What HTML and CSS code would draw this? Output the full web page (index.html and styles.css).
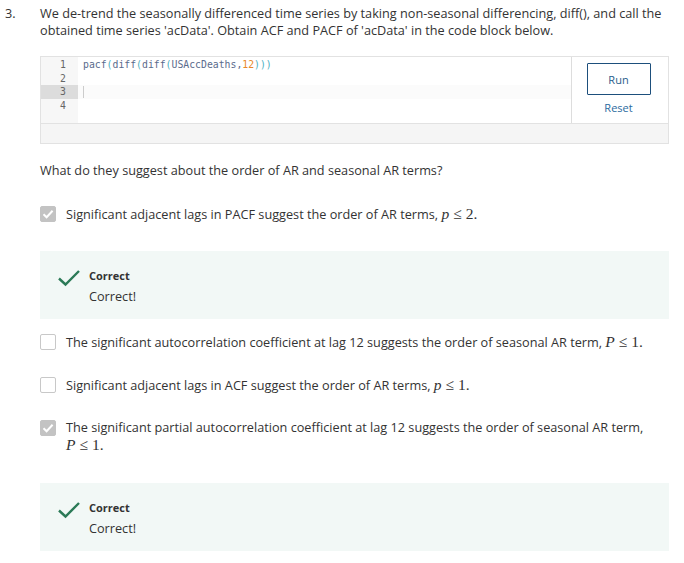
FILE: index.html
```html
<!DOCTYPE html>
<html>
<head>
<meta charset="utf-8">
<link rel="stylesheet" href="styles.css">
</head>
<body>
<div class="question">
  <div class="qnum">3.</div>
  <div class="qbody">
    <p class="prompt">We de-trend the seasonally differenced time series by taking non-seasonal differencing, diff(), and call the obtained time series 'acData'. Obtain ACF and PACF of 'acData' in the code block below.</p>

    <div class="code">
      <div class="code-main">
        <div class="editor">
          <div class="gutter">
            <div class="ln">1</div>
            <div class="ln">2</div>
            <div class="ln active">3</div>
            <div class="ln">4</div>
          </div>
          <div class="lines">
            <div class="cl">pacf<span class="p">(</span>diff<span class="p">(</span>diff<span class="p">(</span>USAccDeaths,<span class="num">12</span><span class="p">)))</span></div>
            <div class="cl">&nbsp;</div>
            <div class="cl activeline"><span class="cursor"></span></div>
            <div class="cl">&nbsp;</div>
          </div>
        </div>
        <div class="actions">
          <button class="run">Run</button>
          <span class="reset">Reset</span>
        </div>
      </div>
      <div class="code-foot"></div>
    </div>

    <p class="sub">What do they suggest about the order of AR and seasonal AR terms?</p>

    <div class="opt">
      <span class="cb checked"><svg viewBox="0 0 16 16" width="16" height="16"><path d="M3.5 8.2 L6.6 11.2 L12.6 4.8" fill="none" stroke="#fff" stroke-width="2"/></svg></span>
      <span class="otext">Significant adjacent lags in PACF suggest the order of AR terms, <span class="math"><i>p</i><span class="rel">≤</span>2.</span></span>
    </div>

    <div class="feedback">
      <svg class="tick" viewBox="0 0 24 18" width="24" height="18"><path d="M2 9.5 L8.5 15.5 L22 2" fill="none" stroke="#2b7a57" stroke-width="2.4"/></svg>
      <div class="fb-text">
        <div class="fb-title">Correct</div>
        <div class="fb-msg">Correct!</div>
      </div>
    </div>

    <div class="opt">
      <span class="cb"></span>
      <span class="otext">The significant autocorrelation coefficient at lag 12 suggests the order of seasonal AR term, <span class="math"><i>P</i><span class="rel">≤</span>1.</span></span>
    </div>

    <div class="opt">
      <span class="cb"></span>
      <span class="otext">Significant adjacent lags in ACF suggest the order of AR terms, <span class="math"><i>p</i><span class="rel">≤</span>1.</span></span>
    </div>

    <div class="opt">
      <span class="cb checked"><svg viewBox="0 0 16 16" width="16" height="16"><path d="M3.5 8.2 L6.6 11.2 L12.6 4.8" fill="none" stroke="#fff" stroke-width="2"/></svg></span>
      <span class="otext">The significant partial autocorrelation coefficient at lag 12 suggests the order of seasonal AR term, <span class="math"><i>P</i><span class="rel">≤</span>1.</span></span>
    </div>

    <div class="feedback last">
      <svg class="tick" viewBox="0 0 24 18" width="24" height="18"><path d="M2 9.5 L8.5 15.5 L22 2" fill="none" stroke="#2b7a57" stroke-width="2.4"/></svg>
      <div class="fb-text">
        <div class="fb-title">Correct</div>
        <div class="fb-msg">Correct!</div>
      </div>
    </div>
  </div>
</div>
</body>
</html>
```

FILE: styles.css
```css
html, body {
  margin: 0;
  padding: 0;
  background: #fff;
}
body {
  font-family: "Open Sans", "Liberation Sans", sans-serif;
  font-size: 12.7px;
  color: #333;
}
.question {
  display: flex;
  padding: 5px 15px 0 5px;
}
.qnum {
  width: 35px;
  flex: none;
  line-height: 17px;
}
.qbody {
  flex: 1;
}
.prompt {
  margin: 0;
  line-height: 17px;
}
.code {
  margin-top: 17px;
  border: 1px solid #e2e2e2;
}
.code-main {
  display: flex;
  height: 66px;
}
.editor {
  flex: 1;
  display: flex;
  border-right: 1px solid #ddd;
}
.gutter {
  width: 37px;
  background: #f7f7f7;
  padding-top: 1px;
}
.ln {
  height: 13.5px;
  line-height: 13.5px;
  font-family: "DejaVu Sans Mono", "Liberation Mono", monospace;
  font-size: 9.8px;
  color: #666;
  text-align: right;
  padding-right: 12px;
}
.ln.active {
  background: #dcdcdc;
}
.lines {
  flex: 1;
  padding-top: 1px;
}
.cl {
  height: 13.5px;
  line-height: 13.5px;
  font-family: "DejaVu Sans Mono", "Liberation Mono", monospace;
  font-size: 9.8px;
  color: #5a6b8c;
  padding-left: 5px;
  white-space: pre;
}
.cl .p {
  color: #4ab0c0;
}
.cl .num {
  color: #e8892b;
}
.cl.activeline {
  background: #fbfbfb;
}
.cursor {
  display: inline-block;
  width: 1px;
  height: 12px;
  background: #ccc;
  vertical-align: top;
  margin-top: 1px;
}
.actions {
  width: 93px;
  padding-right: 3px;
  display: flex;
  flex-direction: column;
  align-items: center;
  padding-top: 6px;
}
.run {
  width: 64px;
  height: 32px;
  border: 1px solid #1d4f7c;
  background: #fff;
  color: #2a5d8c;
  font-family: "Open Sans", "Liberation Sans", sans-serif;
  font-size: 11px;
  padding: 0;
  border-radius: 1px;
}
.reset {
  margin-top: 5px;
  color: #2c6a9e;
  font-size: 11px;
}
.code-foot {
  height: 19px;
  background: #f5f5f5;
  border-top: 1px solid #e2e2e2;
}
.sub {
  margin: 18px 0 0 0;
  line-height: 17px;
}
.opt {
  display: flex;
  align-items: flex-start;
  margin-top: 25px;
  line-height: 17px;
}
.sub + .opt {
  margin-top: 26px;
}
.feedback + .opt {
  margin-top: 14px;
}
.cb {
  flex: none;
  width: 14px;
  height: 14px;
  border: 1px solid #c8c8c8;
  border-radius: 2px;
  background: #fff;
  margin-top: 1px;
  margin-right: 10px;
  position: relative;
}
.cb.checked {
  background: #c3c3c3;
  border-color: #c3c3c3;
}
.cb svg {
  position: absolute;
  left: -1px;
  top: -1px;
}
.math {
  font-family: "Liberation Serif", "DejaVu Serif", serif;
  font-size: 15.5px;
  color: #333;
  white-space: nowrap;
}
.math i {
  font-style: italic;
}
.rel {
  margin: 0 4px;
}
.feedback {
  margin-top: 28px;
  background: #f2f8f6;
  display: flex;
  align-items: flex-start;
  padding: 16px 0 14px 17px;
}
.feedback.last {
  margin-top: 29px;
}
.tick {
  flex: none;
  margin-top: 2px;
  margin-right: 8px;
}
.fb-title {
  font-weight: bold;
  font-size: 11px;
  line-height: 17px;
  color: #333;
}
.fb-msg {
  font-size: 12.7px;
  line-height: 17px;
  margin-top: 4px;
}
```
